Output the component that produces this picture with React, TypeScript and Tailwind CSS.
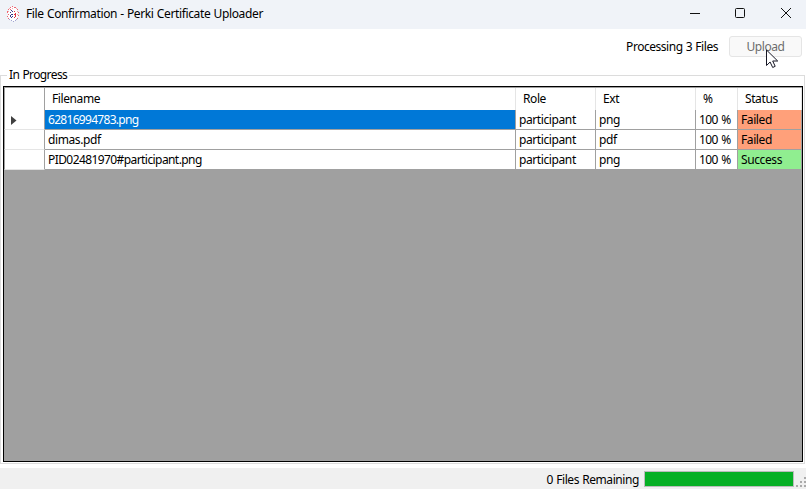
import React from "react";

type Row = { name: string; role: string; ext: string; pct: string; status: string; nameTracking: string; selected?: boolean };

const rows: Row[] = [
  { name: "62816994783.png", role: "participant", ext: "png", pct: "100 %", status: "Failed", nameTracking: "tracking-[-0.7px]", selected: true },
  { name: "dimas.pdf", role: "participant", ext: "pdf", pct: "100 %", status: "Failed", nameTracking: "tracking-[-0.4px]" },
  { name: "PID02481970#participant.png", role: "participant", ext: "png", pct: "100 %", status: "Success", nameTracking: "tracking-[-0.58px]" },
];

const columns = "grid grid-cols-[41px_471px_80px_100px_42px_64px]";

function AppIcon() {
  return (
    <svg className="ml-[7px] h-4 w-3 shrink-0" viewBox="0 0 12 16" shapeRendering="crispEdges">
      <ellipse cx="6" cy="8" rx="5" ry="7" fill="#fff" />
      <path d="M5 0h1v1H5zM3 1h1v1H3zM7 1h2v1H7zM1 3h1v1H1zM10 3h1v1h-1zM3 3h1v1H3zM0 5h1v2H0zM11 6h1v1h-1zM1 8h1v1H1zM0 10h1v1H0zM11 9h1v1h-1zM1 12h1v1H1zM10 12h1v1h-1z" fill="#ee6672" />
      <path d="M5 2h1v1H5zM2 2h1v1H2zM9 2h1v1H9zM1 5h1v1H1zM10 5h1v1h-1zM10 8h1v1h-1z" fill="#f5a8ae" />
      <path d="M4 4h1v1H4zM5 5h1v1H5zM3 6h1v1H3zM4 8h2v1H4zM3 9h1v2H3zM5 10h1v1H5zM4 11h1v1H4z" fill="#37378a" />
      <path d="M7 5h1v1H7zM8 7h1v1H8zM8 8h1v3H8zM7 8h1v1H7zM7 11h1v1H7z" fill="#dd3040" />
      <path d="M2 13h1v1H2zM4 14h1v1H4zM6 15h1v1H6zM8 14h1v1H8zM9 13h1v1H9z" fill="#a4a6d2" />
    </svg>
  );
}

function TitleBar() {
  return (
    <header className="flex h-[29px] shrink-0 items-center bg-[#f0f3f8] pb-[2px]">
      <AppIcon />
      <h1 className="ml-[7px] grow whitespace-nowrap text-[12px] leading-4 tracking-[-0.36px] [word-spacing:0.4px]">
        File Confirmation - Perki Certificate Uploader
      </h1>
      <svg className="h-[27px] w-[138px]" viewBox="0 0 138 27" fill="none" stroke="#111">
        <path d="M22 13.500h10" />
        <rect x="67.500" y="8.500" width="9" height="9" rx="1" />
        <path d="M113 8l10 10M123 8l-10 10" />
      </svg>
    </header>
  );
}

function GridRow({ row }: { row: Row }) {
  return (
    <div className={`${columns} h-5`}>
      <div className="flex items-center border-r border-b border-l border-r-[#a0a0a0] border-b-[#e5e5e5] border-l-[#a0a0a0] bg-white pl-[6px]">
        {row.selected && (
          <svg className="mt-[2px] h-[9px] w-[6px]" viewBox="0 0 6 9">
            <path d="M0 0l5.500 4.500L0 9z" fill="#404040" />
          </svg>
        )}
      </div>
      <div className={`border-r border-b border-[#a0a0a0] pl-[3px] ${row.nameTracking} ${row.selected ? "bg-[#0078d7] text-white" : "bg-white"}`}>{row.name}</div>
      <div className="border-r border-b border-[#a0a0a0] bg-white pl-[3px]">{row.role}</div>
      <div className="border-r border-b border-[#a0a0a0] bg-white pl-[3px]">{row.ext}</div>
      <div className="border-r border-b border-[#a0a0a0] bg-white pl-[3px] tracking-[-0.6px] [word-spacing:1px]">{row.pct}</div>
      <div className={`border-r border-b border-[#a0a0a0] pl-[3px] ${row.status === "Failed" ? "bg-[#ffa07a]" : "bg-[#90ee90]"}`}>{row.status}</div>
    </div>
  );
}

export default function App() {
  return (
    <div className="flex h-[489px] w-[806px] flex-col overflow-hidden bg-white font-['Noto_Sans','Open_Sans',sans-serif] text-[12px] leading-[19px] tracking-[-0.4px] whitespace-nowrap text-black">
      <TitleBar />
      <div className="flex h-[39px] shrink-0 items-start justify-end pt-[7px] pr-1">
        <span className="mt-px mr-[11px] tracking-[-0.46px] [word-spacing:0.5px]">Processing 3 Files</span>
        <div className="relative">
          <button className="h-[21px] w-[73px] rounded-[3px] border border-[#e5e5e5] bg-[#f9f9f9] text-[#6d6d6d]" disabled>
            Upload
          </button>
          <svg className="absolute top-[13px] left-[37px] h-[20px] w-[13px]" viewBox="0 0 13 20">
            <path d="M.5 1v15.500l3.600-3.500 2.600 5.500 2.500-1.200-2.500-5.300h5z" fill="#fff" stroke="#171725" />
          </svg>
        </div>
      </div>
      <fieldset className="relative mt-[7px] mr-px h-[389px] shrink-0 border border-[#dcdcdc] pt-[10px] pl-[2px]">
        <span className="absolute top-[-11px] left-[6px] bg-white px-[2px] tracking-[-0.6px] [word-spacing:0.6px]">In Progress</span>
        <div className="h-[376px] w-[800px] border border-black bg-[#a0a0a0]">
          <div className={`${columns} h-[23px] border-t border-[#a0a0a0] leading-[22px]`}>
            <div className="border-r border-b border-l border-[#a0a0a0] bg-white" />
            <div className="border-r border-b border-r-[#e5e5e5] border-b-[#a0a0a0] bg-white pl-[7px]">Filename</div>
            <div className="border-r border-b border-r-[#e5e5e5] border-b-[#a0a0a0] bg-white pl-[7px]">Role</div>
            <div className="border-r border-b border-r-[#e5e5e5] border-b-[#a0a0a0] bg-white pl-[7px]">Ext</div>
            <div className="border-r border-b border-r-[#e5e5e5] border-b-[#a0a0a0] bg-white pl-[7px]">%</div>
            <div className="border-r border-b border-r-[#e5e5e5] border-b-[#a0a0a0] bg-white pl-[7px]">Status</div>
          </div>
          {rows.map((row) => <GridRow key={row.name} row={row} />)}
        </div>
      </fieldset>
      <footer className="mt-1 flex h-[21px] shrink-0 items-start justify-end bg-[#f0f0f0] pt-[3px]">
        <span className="-mt-px mr-[5px] tracking-[-0.42px] [word-spacing:0.5px]">0 Files Remaining</span>
        <div className="h-4 w-[150px] border border-[#bcbcbc] bg-[#06b025]" />
        <svg className="mt-[6px] ml-[2px] h-[10px] w-[10px]" viewBox="0 0 10 10" fill="#aaa">
          <path d="M8 0h2v2H8zM4 4h2v2H4zM8 4h2v2H8zM0 8h2v2H0zM4 8h2v2H4zM8 8h2v2H8z" />
        </svg>
      </footer>
    </div>
  );
}
